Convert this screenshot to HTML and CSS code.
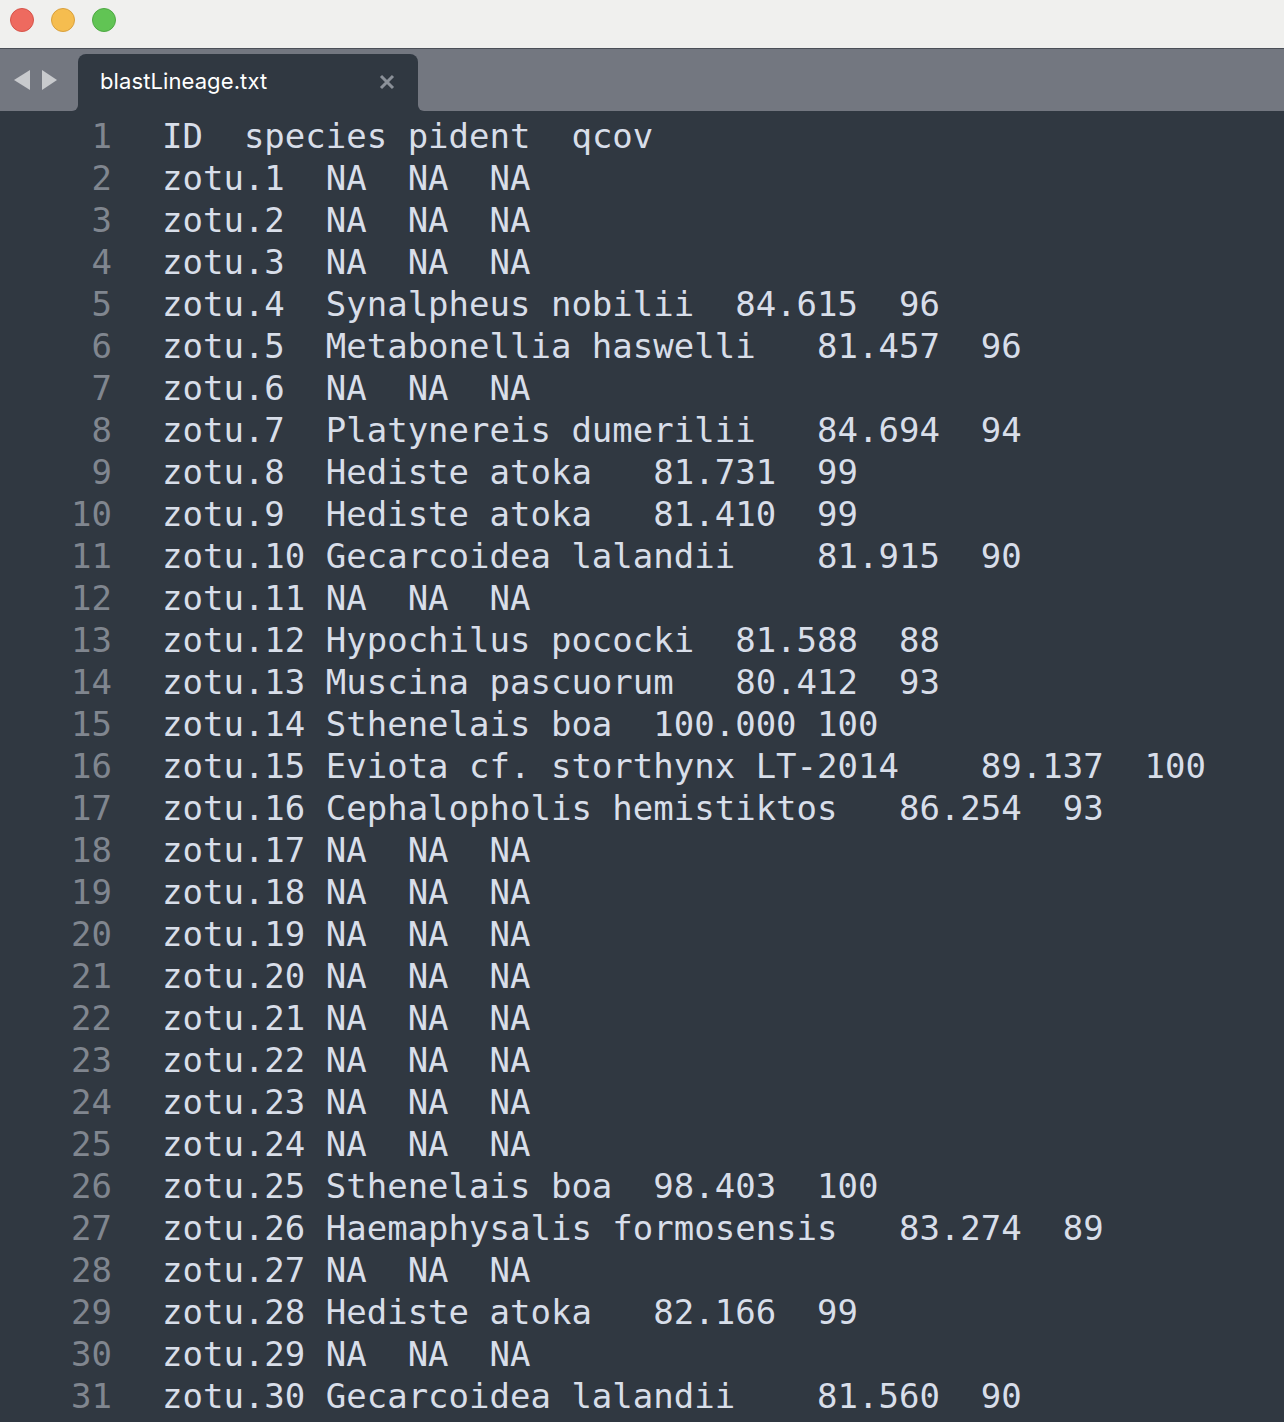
FILE: index.html
```html
<!DOCTYPE html>
<html>
<head>
<meta charset="utf-8">
<title>blastLineage.txt</title>
<link rel="stylesheet" href="styles.css">
</head>
<body>
<div class="window">
  <div class="titlebar">
    <span class="light red"></span>
    <span class="light yellow"></span>
    <span class="light green"></span>
  </div>
  <div class="tabbar">
    <div class="tabbar-left">
      <svg class="arrows" width="60" height="22" viewBox="0 0 60 22">
        <polygon points="14,11 30,1 30,21" fill="#c8cacd"/>
        <polygon points="42,1 57,11 42,21" fill="#c8cacd"/>
      </svg>
    </div>
    <div class="tab-col">
      <div class="tab">
        <span class="tab-title">blastLineage.txt</span>
        <svg class="close" width="16" height="16" viewBox="0 0 16 16">
          <path d="M2 2 L14 14 M14 2 L2 14" stroke="#8b9199" stroke-width="3" stroke-linecap="butt"/>
        </svg>
      </div>
    </div>
    <div class="tabbar-right"></div>
  </div>
  <div class="editor">
    <div class="gutter"><div>1</div><div>2</div><div>3</div><div>4</div><div>5</div><div>6</div><div>7</div><div>8</div><div>9</div><div>10</div><div>11</div><div>12</div><div>13</div><div>14</div><div>15</div><div>16</div><div>17</div><div>18</div><div>19</div><div>20</div><div>21</div><div>22</div><div>23</div><div>24</div><div>25</div><div>26</div><div>27</div><div>28</div><div>29</div><div>30</div><div>31</div></div>
    <pre class="code">ID	species	pident	qcov
zotu.1	NA	NA	NA
zotu.2	NA	NA	NA
zotu.3	NA	NA	NA
zotu.4	Synalpheus nobilii	84.615	96
zotu.5	Metabonellia haswelli	81.457	96
zotu.6	NA	NA	NA
zotu.7	Platynereis dumerilii	84.694	94
zotu.8	Hediste atoka	81.731	99
zotu.9	Hediste atoka	81.410	99
zotu.10	Gecarcoidea lalandii	81.915	90
zotu.11	NA	NA	NA
zotu.12	Hypochilus pococki	81.588	88
zotu.13	Muscina pascuorum	80.412	93
zotu.14	Sthenelais boa	100.000	100
zotu.15	Eviota cf. storthynx LT-2014	89.137	100
zotu.16	Cephalopholis hemistiktos	86.254	93
zotu.17	NA	NA	NA
zotu.18	NA	NA	NA
zotu.19	NA	NA	NA
zotu.20	NA	NA	NA
zotu.21	NA	NA	NA
zotu.22	NA	NA	NA
zotu.23	NA	NA	NA
zotu.24	NA	NA	NA
zotu.25	Sthenelais boa	98.403	100
zotu.26	Haemaphysalis formosensis	83.274	89
zotu.27	NA	NA	NA
zotu.28	Hediste atoka	82.166	99
zotu.29	NA	NA	NA
zotu.30	Gecarcoidea lalandii	81.560	90</pre>
  </div>
</div>
</body>
</html>
```

FILE: styles.css
```css
html, body {
  margin: 0;
  padding: 0;
  background: #303841;
}
.window {
  width: 1284px;
  height: 1422px;
  overflow: hidden;
  display: flex;
  flex-direction: column;
  background: #303841;
}
.titlebar {
  height: 48px;
  flex: none;
  background: #f0f0ee;
  border-bottom: 1px solid #4b4f57;
  display: flex;
  align-items: flex-start;
  padding-left: 10px;
  gap: 17px;
  box-sizing: content-box;
}
.light {
  width: 24px;
  height: 24px;
  margin-top: 8px;
  border-radius: 50%;
  box-sizing: border-box;
}
.red { background: #ee6a5f; border: 1px solid #d6544a; }
.yellow { background: #f5bd4f; border: 1px solid #d9a03c; }
.green { background: #61c454; border: 1px solid #4ea943; }
.tabbar {
  height: 62px;
  flex: none;
  display: flex;
  background: #303841;
}
.tabbar-left {
  width: 78px;
  background: #737780;
  border-bottom-right-radius: 6px;
  display: flex;
  align-items: flex-start;
}
.arrows {
  display: block;
  margin-top: 20px;
}
.tab-col {
  width: 340px;
  background: #737780;
  padding-top: 5px;
  display: flex;
}
.tab {
  flex: 1;
  background: #303841;
  border-top-left-radius: 8px;
  border-top-right-radius: 8px;
  display: flex;
  align-items: center;
  padding: 0 23px 3px 22px;
  justify-content: space-between;
}
.tab-title {
  font-family: Inter, "Noto Sans", sans-serif;
  font-size: 22px;
  color: #ffffff;
  letter-spacing: 0.1px;
}
.close {
  display: block;
  margin-top: 2px;
}
.tabbar-right {
  flex: 1;
  background: #737780;
  border-bottom-left-radius: 6px;
}
.editor {
  flex: 1;
  display: flex;
  padding-top: 4px;
  font-family: "DejaVu Sans Mono", "Liberation Mono", monospace;
  font-size: 34px;
  line-height: 42px;
}
.gutter {
  width: 112px;
  flex: none;
  text-align: right;
  color: #80868f;
}
.code {
  margin: 0 0 0 50px;
  font: inherit;
  color: #d8dee9;
  tab-size: 4;
  -moz-tab-size: 4;
  white-space: pre;
}
```
